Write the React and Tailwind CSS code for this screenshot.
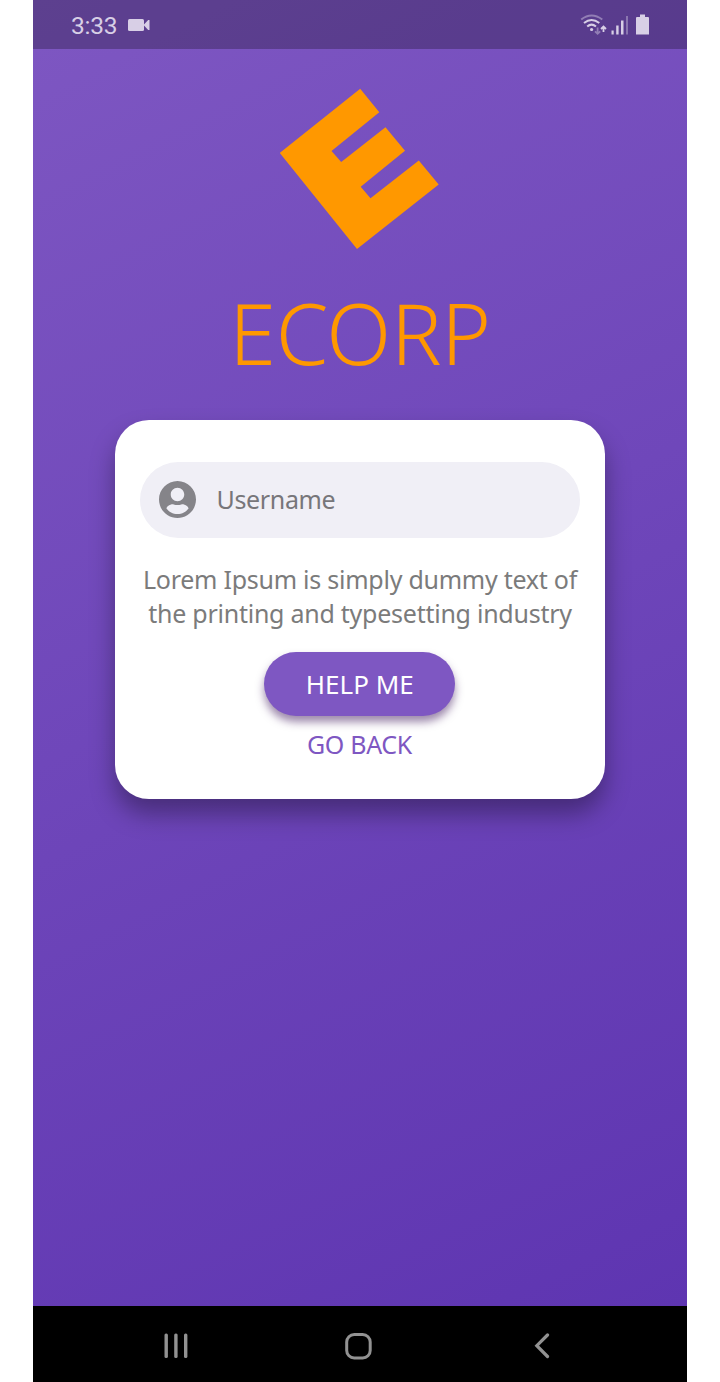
function StatusBar() {
  return (
    <header className="flex h-[49px] shrink-0 items-center bg-black/26 pr-[37px] pl-[38px] text-[#d8cfe6]">
      <span className="pt-[2px] font-[Roboto,sans-serif] text-[24.5px] leading-[28px] tracking-[-0.2px]">3:33</span>
      <svg className="ml-[11px]" width="22" height="12" viewBox="0 0 22 12" fill="currentColor">
        <rect x="0" y="0" width="16" height="12" rx="1.5" />
        <path d="M15.500 6L20.200 1H21.500V11H20.200Z" />
      </svg>
      <svg className="ml-auto" width="70" height="24" viewBox="580 12.5 70 24" fill="none">
        <g stroke="currentColor" strokeWidth="2">
          <path d="M581.200 19Q591.500 11 602.300 19" opacity=".45" />
          <path d="M584 22.500Q591.500 16.500 599.300 22.500" />
          <path d="M587.200 26Q591.500 22.300 596 26" />
        </g>
        <circle cx="591.600" cy="29" r="1.600" fill="currentColor" />
        <path d="M597.600 27V33M595 30.800L597.600 33.300L600.200 30.800" stroke="currentColor" strokeWidth="1.800" opacity=".45" />
        <path d="M603.500 31.500V26M601 28.500L603.500 26L606 28.500" stroke="currentColor" strokeWidth="1.800" />
        <g fill="currentColor">
          <rect x="611.500" y="30" width="2.200" height="4" />
          <rect x="616.200" y="25" width="2.400" height="9" />
          <rect x="621" y="20" width="2.500" height="14" />
          <rect x="626" y="15.500" width="2" height="18.500" opacity=".4" />
          <path d="M640 14H645V16.500H648Q649 16.500 649 17.500V34H636V17.500Q636 16.500 637 16.500H640Z" />
        </g>
      </svg>
    </header>
  );
}

function Logo() {
  return (
    <svg className="mt-[39px] block" width="160" height="162" viewBox="280 88 160 162" fill="#ff9800">
      <path d="M360.200 88.700L379.300 112.200L331.500 151L341.200 162L385.500 127.200L405 150.700L360.700 186.700L370.500 198.200L418.800 160.500L438.700 184.500L357 249L279.700 153Z" />
    </svg>
  );
}

function LoginCard() {
  return (
    <section className="flex h-[379px] w-[490px] flex-col items-center rounded-[34px] bg-white pt-[42.4px] shadow-[0_15px_24px_rgba(0,0,0,0.34)]">
      <label className="flex h-[76px] w-[440px] shrink-0 items-center rounded-full bg-[#f0eff6] pl-[19px]">
        <svg width="37" height="37" viewBox="2 2 20 20" fill="#858489">
          <path d="M12 2C6.480 2 2 6.480 2 12s4.480 10 10 10 10-4.480 10-10S17.520 2 12 2zm0 3.600c2.050 0 3.650 1.650 3.650 3.650S14.050 12.900 12 12.900 8.350 11.300 8.350 9.250 9.950 5.600 12 5.600zm0 14.300c-2.500 0-4.700-1.200-6-3.150.5-1.500 2.800-2.400 3.900-2.100 1.400.45 2.800.45 4.200 0 1.100-.3 3.400.6 3.900 2.100-1.300 1.950-3.500 3.150-6 3.150z" />
        </svg>
        <span className="ml-[20.5px] pb-[1px] text-[25px] leading-[34px] tracking-[-0.35px] text-[#77767a]">Username</span>
      </label>
      <p className="mt-[24px] text-center text-[25px] leading-[34px] tracking-[-0.25px] whitespace-nowrap text-[#7b7b7b]">
        Lorem Ipsum is simply dummy text of
        <br />
        the printing and typesetting industry
      </p>
      <button className="mt-[22.600px] mr-[0.5px] flex h-[64px] w-[191px] shrink-0 items-center justify-center rounded-full bg-[#7e57c2] text-[26px] leading-[34px] text-white shadow-[0_6px_9px_rgba(60,20,90,0.5)]">
        HELP ME
      </button>
      <button className="mt-[11px] mr-[1px] text-[25px] leading-[34px] tracking-[-0.3px] text-[#7e57c2]">GO BACK</button>
    </section>
  );
}

function NavBar() {
  return (
    <nav className="flex h-[76px] shrink-0 items-center bg-black pt-[4px] pl-[131px] text-[#929292]">
      <svg width="24" height="26" viewBox="0 0.5 24 26" fill="currentColor">
        <rect x="0.500" y="1" width="3.400" height="24.500" rx="1.500" />
        <rect x="10.200" y="1" width="3.400" height="24.500" rx="1.500" />
        <rect x="20" y="1" width="3.400" height="24.500" rx="1.500" />
      </svg>
      <svg className="ml-[157px]" width="27" height="27" viewBox="0 0.5 27 27" fill="none" stroke="currentColor" strokeWidth="3">
        <rect x="1.700" y="2" width="23.500" height="23.500" rx="7.500" />
      </svg>
      <svg className="ml-[162px]" width="16" height="26" viewBox="0 0.5 16 26" fill="none" stroke="currentColor" strokeWidth="3.200" strokeLinecap="round">
        <path d="M13.500 2.500L2.800 13.200L13.500 24" />
      </svg>
    </nav>
  );
}

export default function App() {
  return (
    <div className="flex h-[1382px] w-[720px] justify-center overflow-hidden bg-white font-['Noto_Sans',sans-serif]">
      <div className="flex w-[654px] flex-col">
        <main className="flex h-[1306px] flex-col bg-[linear-gradient(153.4deg,#7e57c2,#5e35b1)]">
          <StatusBar />
          <div className="flex flex-col items-center">
            <Logo />
            <h1 className="mt-[24px] mb-[28.5px] h-[117px] text-[84.5px] leading-[117px] font-light tracking-[-0.3px] text-[#ff9800]">ECORP</h1>
            <LoginCard />
          </div>
        </main>
        <NavBar />
      </div>
    </div>
  );
}
